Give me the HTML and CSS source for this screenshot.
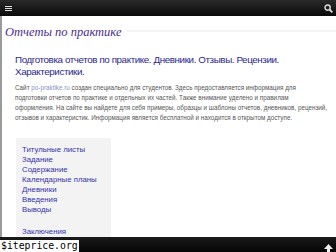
FILE: index.html
```html
<!doctype html>
<html lang=ru>
  <head>
    <meta charset=utf-8 />
    <title>Отчеты по практике</title>
    <link rel="stylesheet" href="styles.css">
  </head>
  <body>
    <div class=topbar>
      <span class=burger><i></i><i></i><i></i></span>
      <svg class=search width=9 height=9 viewBox="0 0 9 9"><circle cx=3.6 cy=3.6 r=2.6 fill=none stroke="#ddd" stroke-width=1.4 /><line x1=5.5 y1=5.5 x2=8.3 y2=8.3 stroke="#ddd" stroke-width=1.8 /></svg>
    </div>
    <div class=page>
      <div class=site-title>
        <span>Отчеты по практике</span>
        <div class=rule></div>
      </div>
      <div class=intro>
        <h1>Подготовка отчетов по практике. Дневники. Отзывы. Рецензии. Характеристики.</h1>
        <p>Сайт <a href="#">po-praktike.ru</a> создан специально для студентов. Здесь предоставляется информация для<br>
        подготовки отчетов по практике и отдельных их частей. Также внимание уделено и правилам<br>
        оформления. На сайте вы найдете для себя примеры, образцы и шаблоны отчетов, дневников, рецензий,
        отзывов и характеристик. Информация является бесплатной и находится в открытом доступе.</p>
      </div>
      <ul class=menu>
        <li><a href="#">Титульные листы</a></li>
        <li><a href="#">Задание</a></li>
        <li><a href="#">Содержание</a></li>
        <li><a href="#">Календарные планы</a></li>
        <li><a href="#">Дневники</a></li>
        <li><a href="#">Введения</a></li>
        <li><a href="#">Выводы</a></li>
        <li class=spaced><a href="#">Заключения</a></li>
      </ul>
    </div>
    <div class=bottombar>
      <span class=mark>$iteprice.org</span>
      <svg class=up width=9 height=8 viewBox="0 0 9 8"><path d="M4.5 0 L9 5 L6 5 L6 8 L3 8 L3 5 L0 5 Z" fill="#eee" /></svg>
    </div>
  </body>
</html>
```

FILE: styles.css
```css
html, body {
  height: 100%;
}

body {
  background: #fff;
  margin: 0;
  padding: 0;
  overflow: hidden;
  display: flex;
  flex-direction: column;
  font-family: 'Liberation Sans', Arial, sans-serif;
}

.topbar {
  height: 16px;
  flex: none;
  background: linear-gradient(#2a2a2a, #0a0a0a);
  display: flex;
  align-items: center;
  justify-content: space-between;
  padding: 0 3px 0 5px;
}

.burger {
  display: flex;
  flex-direction: column;
  gap: 1px;
  width: 7px;
}
.burger i {
  display: block;
  height: 1px;
  background: #ddd;
}

.page {
  flex: 1;
  min-height: 0;
  border-left: 2px solid #9a9a9a;
  overflow: hidden;
  display: flex;
  flex-direction: column;
}

.site-title {
  display: flex;
  align-items: center;
  gap: 6px;
  padding: 8px 0 0 3px;
  height: 16px;
}
.site-title span {
  font-family: 'Liberation Serif', serif;
  font-style: italic;
  font-size: 12.5px;
  line-height: 16px;
  color: #4a2c8c;
  white-space: nowrap;
}
.site-title .rule {
  flex: 1;
  height: 2px;
  margin-top: -3px;
  background: #f3f3f3;
}

.intro {
  padding: 14px 2px 0 13px;
}

.intro h1 {
  font-weight: normal;
  font-size: 9.8px;
  letter-spacing: -0.4px;
  line-height: 12px;
  color: #2c1f8e;
  margin: 0 0 5px 0;
}

.intro p {
  font-size: 6.3px;
  line-height: 10px;
  color: #555;
  margin: 0;
}
.intro p a {
  color: #8a93c4;
  text-decoration: none;
}

.menu {
  list-style: none;
  flex: 1;
  margin: 15px 0 0 14px;
  padding: 7px 0 0 6px;
  width: 89px;
  background: #f3f3f3;
}
.menu li {
  font-size: 7.8px;
  line-height: 10px;
  white-space: nowrap;
}
.menu li.spaced {
  margin-top: 12px;
}
.menu a {
  color: #3434a8;
  text-decoration: none;
}

.bottombar {
  height: 15px;
  flex: none;
  background: linear-gradient(#1a1a1a, #050505);
  display: flex;
  align-items: flex-end;
  justify-content: space-between;
  padding-right: 3px;
}

.mark {
  background: #fff;
  color: #000;
  font-family: 'DejaVu Sans Mono', monospace;
  font-size: 9.8px;
  line-height: 12px;
  padding: 0 1px;
}
```
